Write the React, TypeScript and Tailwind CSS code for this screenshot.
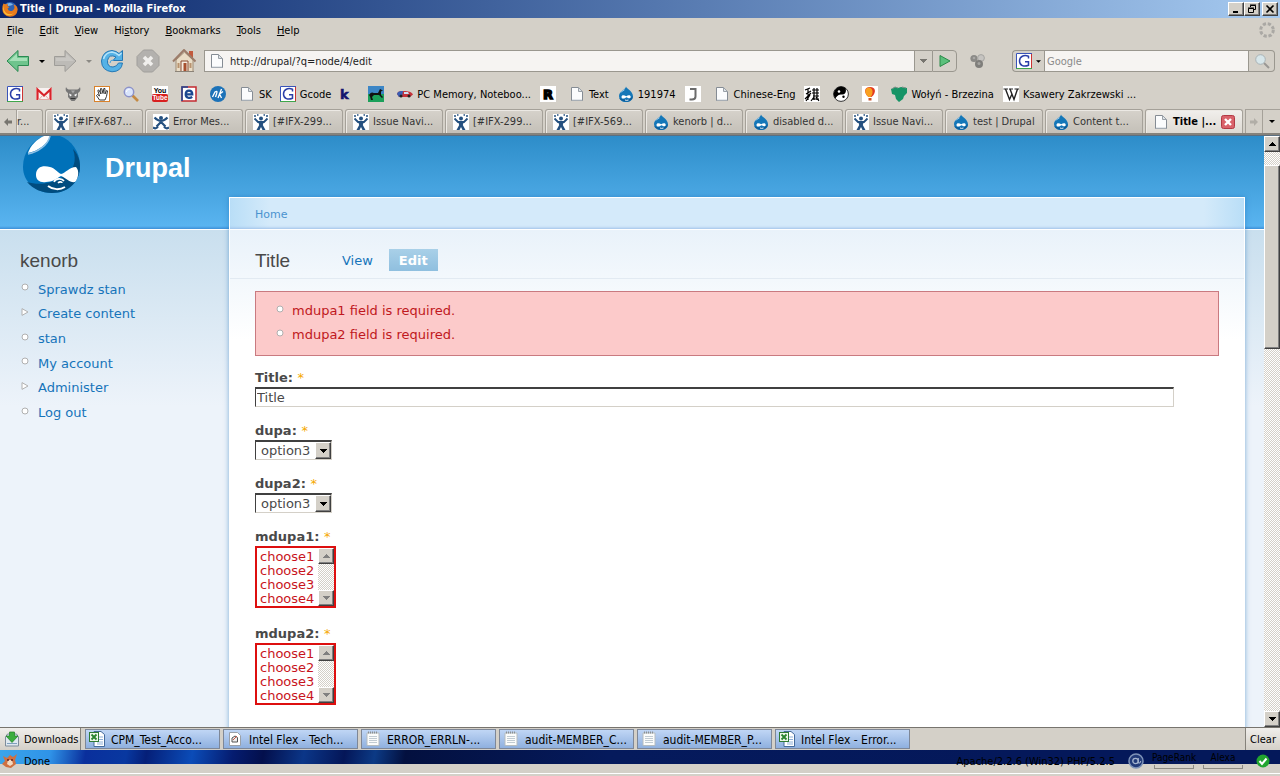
import React from "react";
import clsx from "clsx";

type IconName =
  | "google" | "gmail" | "devil" | "hand" | "magnifier" | "youtube" | "e" | "nk"
  | "page" | "k" | "horse" | "car" | "r" | "drupal" | "j" | "noise" | "yin"
  | "balloon" | "brzezina" | "wiki" | "jira" | "jiraX" | "excel" | "notepad" | "doc";

const Icon: React.FC<{ name: IconName; className?: string }> = ({ name, className }) => (
  <svg viewBox="0 0 16 16" className={clsx("size-4 shrink-0", className)} aria-hidden="true">
    {glyphs[name]}
  </svg>
);

const glyphs: Record<IconName, React.ReactNode> = {
  google: (
    <>
      <rect width="16" height="16" fill="#fff" />
      <path d="M.5 16V.5H16" stroke="#3a54b8" fill="none" />
      <path d="M0 15.500h16" stroke="#3fa64b" />
      <path d="M15.500 1v14" stroke="#c33" />
      <path d="M12.500 5.500V3.300C8 1.500 3.500 3.500 3.500 8s4.500 6.300 9 4.200V8.700H9" fill="none" stroke="#2b3fa8" strokeWidth="1.500" />
    </>
  ),
  gmail: (
    <>
      <rect y="2" width="16" height="12" fill="#f8f1f0" />
      <path d="M1.500 14V3.500L8 9.500l6.500-6V14" fill="none" stroke="#d8232a" strokeWidth="2.200" />
      <path d="M3 13.500l3.500-4M13 13.500l-3.500-4M2 13.500h12" stroke="#e2a9a5" />
    </>
  ),
  devil: (
    <>
      <path d="M1 1c-1 3 0 5 2 6v4l3.500 4h3L13 11V7c2-1 3-3 2-6-1 2-2 2.500-4 2.500H5C3 3.500 2 3 1 1z" fill="#777" />
      <path d="M4 7.500l3 1.500-2 1.500zM12 7.500L9 9l2 1.500z" fill="#fff" />
      <path d="M5.500 12.500h5" stroke="#333" />
      <path d="M6 4.500h4l-2 3z" fill="#a9a9a9" />
    </>
  ),
  hand: (
    <>
      <rect x=".5" y=".5" width="15" height="15" fill="#fff" stroke="#d9822b" />
      <path d="M5.500 14L2.500 9.500l1-1 2 1.500L3.800 4.500l1-.6L7 8 6.500 2.600h1.200L9 7.500l.8-5h1.100L11 8l1.500-3.500 1 .4-1 5.500L11 14z" fill="#fff" stroke="#222" strokeWidth=".9" />
    </>
  ),
  magnifier: (
    <>
      <path d="M9.500 9.500l5.500 5.500" stroke="#c48a43" strokeWidth="2.600" />
      <circle cx="6" cy="6" r="4.700" fill="#d9e4fb" stroke="#8c92c9" strokeWidth="1.500" />
      <path d="M3.500 6a2.500 2.500 0 0 1 3-2.600" stroke="#fff" fill="none" />
    </>
  ),
  youtube: (
    <>
      <rect width="16" height="8" fill="#fff" />
      <rect y="8" width="16" height="8" rx="2" fill="#d8201f" />
      <text x="8" y="6.500" textAnchor="middle" fontSize="7" fontWeight="bold" fontFamily="Liberation Sans, sans-serif">You</text>
      <text x="8" y="14.300" textAnchor="middle" fontSize="6.500" fontWeight="bold" fill="#fff" fontFamily="Liberation Sans, sans-serif">Tube</text>
    </>
  ),
  e: (
    <>
      <rect x="1" y="1" width="14" height="14" fill="#fff" stroke="#c22a30" strokeWidth="1.500" />
      <path d="M1 15V1h6" fill="none" stroke="#1e4b9b" strokeWidth="1.500" />
      <path d="M4.500 8.300h6.800C11.300 3.500 4.700 3.500 4.700 8.300c0 4 4.300 4.300 6.500 2.600" fill="none" stroke="#1b4790" strokeWidth="2.200" />
    </>
  ),
  nk: (
    <>
      <circle cx="8" cy="8" r="8" fill="#1c72b8" />
      <path d="M2.500 11L5 6q3-2 1.500 2L5.500 11M8 12l3.500-9M9 8.500l4-3M9.500 8l2 4" stroke="#fff" strokeWidth="1.300" fill="none" />
    </>
  ),
  page: (
    <>
      <path d="M2.500 1.500h7l4 4v9h-11z" fill="#fbfcfd" stroke="#858c94" />
      <path d="M9.500 1.500v4h4z" fill="#dfe4e8" stroke="#9aa1a8" />
      <path d="M3 14h10" stroke="#c9d0d6" />
    </>
  ),
  k: (
    <text x="1" y="13" fontSize="13" fontWeight="bold" fill="#14146e" stroke="#14146e" strokeWidth=".6" fontFamily="DejaVu Sans, sans-serif">k</text>
  ),
  horse: (
    <>
      <rect width="16" height="8" fill="#3c86c6" />
      <rect y="8" width="16" height="8" fill="#1ba05a" />
      <path d="M1 9c2-3 3-3 5-2h4l2-4 3 1.500-2 1V9l2 2-1 1-3-3H6l-2 2 1 3H3l-1-3.500z" fill="#111" />
    </>
  ),
  car: (
    <>
      <path d="M0 8c1-3 3-3 7-3s8 1 9 3.500L13 11H2z" fill="#c5333a" />
      <path d="M0 8c1-3 3-3 6-3l-1 6H2z" fill="#3a5fb5" />
      <path d="M7 6h4l1 2H7z" fill="#cfe0f2" />
      <circle cx="4" cy="10" r="1.500" fill="#222" />
      <circle cx="12" cy="10" r="1.500" fill="#222" />
    </>
  ),
  r: (
    <>
      <rect width="16" height="16" fill="#fff" />
      <text x="8" y="13" textAnchor="middle" fontSize="13" fontWeight="bold" stroke="#000" strokeWidth="1.400" fontFamily="DejaVu Sans, sans-serif">R</text>
    </>
  ),
  drupal: (
    <>
      <path d="M8 .5C8.500 3 15 5 15 10.300a6.500 5.500 0 0 1-14 0C1 5 7.500 4 8 .5z" fill="#1577b8" />
      <path d="M1.300 12c2 2 11 2.500 13.500-2C15 17 3 17 1.300 12z" fill="#0d5e9b" />
      <path d="M3.500 11c0-2.500 3-2 4.700-.7 2-1.500 4.700-1.500 4.500.9-.6 2-2.700.8-4.300.1C6.500 12.600 3.700 13.500 3.500 11z" fill="#fff" />
      <path d="M7 14q1.500.8 3.500 0" stroke="#fff" fill="none" strokeWidth=".9" />
      <path d="M3 6.500Q4.500 4.500 6.500 3.800" stroke="#a8d2ee" fill="none" />
    </>
  ),
  j: (
    <>
      <rect width="16" height="16" fill="#fff" />
      <path d="M5 3h5.500v7.500q0 3-3.500 3H4.500" fill="none" stroke="#6b6b6b" strokeWidth="2" />
    </>
  ),
  noise: (
    <>
      <rect width="16" height="16" fill="#fff" />
      <path d="M1 4l5-2M2 8l5-3M1 13l6-6M4 3v11M6 9l-4 6M8 4h7M8 7h7M9 10h6M8 13h7M10 2v12M13 2v12M7 15l3-4M12 11l3 4" stroke="#000" strokeWidth="1.200" />
    </>
  ),
  yin: (
    <>
      <circle cx="8" cy="8" r="7.400" fill="#fff" stroke="#333" />
      <path d="M12.500 2A7.400 7.400 0 0 0 2 12C3 13 4 8 8.500 8.500S13.500 5 12.500 2z" fill="#000" />
      <circle cx="6" cy="5.500" r="1.300" fill="#fff" />
      <circle cx="10.500" cy="10.800" r="1.200" fill="#000" />
    </>
  ),
  balloon: (
    <>
      <rect width="16" height="16" fill="#fff" />
      <path d="M8 1c6 0 6.500 6 1.500 10h-3C1.500 7 2 1 8 1z" fill="#e23a22" />
      <path d="M7 1.500c5 1 4 7 1.500 9.500h-2C1.500 7 3 1.500 7 1.500z" fill="#f9a01f" />
      <rect x="6.500" y="12" width="3" height="2.500" fill="#c9542c" />
    </>
  ),
  brzezina: (
    <>
      <path d="M0 3l4-2 3 1 3-1 6 1v5l-3 3-1 3-4 3-3-3-1-4-3-1z" fill="#169466" />
      <path d="M1 3l3-2 3 1M11 1l4 1" stroke="#7f8f88" fill="none" />
    </>
  ),
  wiki: (
    <>
      <rect width="16" height="16" fill="#fff" />
      <path d="M.5 3h4.500M6 3h4M11.500 3H16" stroke="#222" />
      <path d="M2.500 3l4 10.500L9 8M7 3l4 10.500L14.500 3" stroke="#222" strokeWidth="1.400" fill="none" />
    </>
  ),
  jira: (
    <>
      <rect width="16" height="16" fill="#fff" />
      <circle cx="8" cy="4.500" r="2" fill="#24507f" />
      <path d="M1.500 4.500L5 8h6l3.500-3.500" stroke="#24507f" strokeWidth="1.800" fill="none" />
      <path d="M5 7.200h6L9.800 11l2.700 5H9.500L8 13l-1.500 3h-3l2.700-5z" fill="#24507f" />
      <path d="M1 2h2M4 1h1.500M10.500 1H12M13 2h2" stroke="#24507f" strokeWidth="1.300" />
    </>
  ),
  jiraX: (
    <>
      <rect width="16" height="16" fill="#fff" />
      <path d="M1.500 3.500Q5 7 8 7t6.500-3.500M8 8l-4.500 4.500M8 8l4.500 4.500M0 13.500q3 2 5-1M16 13.500q-3 2-5-1" stroke="#24507f" strokeWidth="2.200" fill="none" />
      <circle cx="8" cy="4" r="2" fill="#24507f" />
    </>
  ),
  excel: (
    <>
      <path d="M5 .5h7l3.500 3v12H5z" fill="#fff" stroke="#456a9b" />
      <path d="M8 6h6M8 8.500h6M8 11h6M8 13h6" stroke="#8fb0d8" />
      <rect x=".5" y="1.500" width="9" height="9" fill="#eef7ea" stroke="#2f7a34" />
      <path d="M2.500 3.500l5 5M7.500 3.500l-5 5" stroke="#28832f" strokeWidth="1.800" />
    </>
  ),
  notepad: (
    <>
      <path d="M2 2h12v12.500H2z" fill="#fbfcfb" stroke="#b5bcc0" />
      <path d="M3 1.500h10" stroke="#8b8f92" strokeDasharray="1 1" strokeWidth="2" />
      <path d="M4 5.500h8M4 7.500h8M4 9.500h8M4 11.500h8" stroke="#c1cbd2" />
    </>
  ),
  doc: (
    <>
      <path d="M2.500 1.500h8l3 3v10h-11z" fill="#fff" stroke="#9aa0a8" />
      <path d="M5 7l3-2 2.500 1.500V11H5z" fill="#eee" stroke="#555" />
      <path d="M6 9l4-4" stroke="#c54" />
    </>
  ),
};

const menus = [
  ["", "F", "ile"],
  ["", "E", "dit"],
  ["", "V", "iew"],
  ["Hi", "s", "tory"],
  ["", "B", "ookmarks"],
  ["", "T", "ools"],
  ["", "H", "elp"],
];

const bookmarks: { icon: IconName; label?: string; tight?: boolean }[] = [
  { icon: "google" },
  { icon: "gmail" },
  { icon: "devil" },
  { icon: "hand" },
  { icon: "magnifier" },
  { icon: "youtube" },
  { icon: "e" },
  { icon: "nk" },
  { icon: "page", label: "SK", tight: true },
  { icon: "google", label: "Gcode", tight: true },
  { icon: "k" },
  { icon: "horse" },
  { icon: "car", label: "PC Memory, Noteboo..." },
  { icon: "r" },
  { icon: "page", label: "Text" },
  { icon: "drupal", label: "191974" },
  { icon: "j" },
  { icon: "page", label: "Chinese-Eng" },
  { icon: "noise" },
  { icon: "yin" },
  { icon: "balloon" },
  { icon: "brzezina", label: "Wołyń - Brzezina" },
  { icon: "wiki", label: "Ksawery Zakrzewski ..." },
];

const tabs: { icon: IconName; label: string }[] = [
  { icon: "jira", label: "[#IFX-687..." },
  { icon: "jiraX", label: "Error Mes..." },
  { icon: "jira", label: "[#IFX-299..." },
  { icon: "jira", label: "Issue Navi..." },
  { icon: "jira", label: "[#IFX-299..." },
  { icon: "jira", label: "[#IFX-569..." },
  { icon: "drupal", label: "kenorb | d..." },
  { icon: "drupal", label: "disabled d..." },
  { icon: "jira", label: "Issue Navi..." },
  { icon: "drupal", label: "test | Drupal" },
  { icon: "drupal", label: "Content t..." },
];

const downloads: { icon: IconName; label: string }[] = [
  { icon: "excel", label: "CPM_Test_Acco..." },
  { icon: "doc", label: "Intel Flex - Tech..." },
  { icon: "notepad", label: "ERROR_ERRLN-..." },
  { icon: "notepad", label: "audit-MEMBER_C..." },
  { icon: "notepad", label: "audit-MEMBER_P..." },
  { icon: "excel", label: "Intel Flex - Error..." },
];

const sideLinks = [
  { label: "Sprawdz stan" },
  { label: "Create content", parent: true },
  { label: "stan" },
  { label: "My account" },
  { label: "Administer", parent: true },
  { label: "Log out" },
];

const raised =
  "border border-t-white border-l-white border-r-[#404040] border-b-[#404040] bg-[#d4d0c8] shadow-[inset_-1px_-1px_0_#808080]";
const dither =
  "bg-[repeating-conic-gradient(#d4d0c8_0_25%,#fff_0_50%)] bg-[length:2px_2px]";

const Caret: React.FC<{ up?: boolean; color?: string }> = ({ up, color = "#000" }) => (
  <svg viewBox="0 0 7 4" className="h-1 w-[7px]" aria-hidden="true" shapeRendering="crispEdges">
    <path d={up ? "M0 4h7L3.500 0z" : "M0 0h7L3.500 4z"} fill={color} />
  </svg>
);

const Bullet: React.FC<{ parent?: boolean }> = ({ parent }) => (
  <svg viewBox="0 0 8 8" className="mb-1 size-2 shrink-0" aria-hidden="true">
    {parent ? (
      <path d="M1 .6v6.800L7 4z" fill="#fff" stroke="#b0b0b0" />
    ) : (
      <circle cx="4" cy="4" r="3" fill="#fff" stroke="#b0b0b0" />
    )}
  </svg>
);

const FirefoxLogo = () => (
  <svg viewBox="0 0 16 16" className="size-4 shrink-0" aria-hidden="true">
    <circle cx="8" cy="8" r="7" fill="#2c62b5" />
    <path d="M5 2.500q4-1.500 6 1l-2 1-3 .5z" fill="#7cb5e8" />
    <path d="M1.500 2.500Q3 3.500 4 3.300q1-.8 2-.6L5.300 5l2.200 1-2 1.500q1 3 4 2.500 3-1 3-4l-1-2.500Q15.500 4.500 15.700 8.500 15 15.500 8 15.700.5 15 .3 8q0-3.500 1.200-5.500z" fill="#e87b1c" />
    <path d="M1.500 3Q.5 9 4 12q4 2.500 8 0-3 3.500-7.500 2Q-.5 11 1.500 3z" fill="#f9c138" />
  </svg>
);

const DrupalLogo = () => (
  <svg viewBox="0 0 58 58" className="h-[58px] w-[58px] shrink-0" aria-hidden="true">
    <path d="M22 0h16C49 4 58 15 58 30 58 46 46 57 30 57S1 46 1 31C1 16 10 5 22 0z" fill="#0071b9" />
    <path d="M51 13c4 12 1 21-9 27-10 7-24 10-37 6 6 7 15 11 25 11 16 0 28-11 28-27 0-7-3-13-7-17z" fill="#004c7f" />
    <path d="M22 0h6c-2 8-12 15-22 17C8 10 15 3 22 0z" fill="#fff" />
    <path d="M28 0c-2 9-12 16-22 18" stroke="#8ec1e6" strokeWidth="1.500" fill="none" />
    <path d="M14 39c0-9 8-10 14-8 5 1 7 5 11 7 5-1 8-7 15-7 4 4 2 12-1 15-5 1-9-4-14-6-5 3-9 6-15 6-6 1-10-2-10-7z" fill="#fff" />
    <path d="M32 46c2-4 8-4 10-1M36 47c2-2 4-1 4 0" stroke="#fff" strokeWidth="1.600" fill="none" />
    <path d="M26 50c5 4 12 4 17 1" stroke="#fff" strokeWidth="2" fill="none" />
  </svg>
);

const NavIcon: React.FC<{ label: string; children: React.ReactNode; className?: string }> = ({
  label,
  children,
  className,
}) => (
  <button type="button" aria-label={label} className={clsx("shrink-0", className)}>
    <svg viewBox="0 0 24 24" className="size-6">
      {children}
    </svg>
  </button>
);

const Toolbar = () => (
  <div className="flex h-[38px] items-center pr-[5px] pl-[6px]">
    <NavIcon label="Back">
      <path d="M1 12L12 1.500v6h10.500v9H12v6z" fill="#6fc48d" stroke="#2a8a52" />
      <path d="M3 12l8-7.500V9h10v3z" fill="#a6e0b8" />
    </NavIcon>
    <button type="button" aria-label="Back history" className="flex w-[23px] justify-center">
      <svg viewBox="0 0 6 3" className="h-[3px] w-[6px]"><path d="M0 0h6L3 3z" /></svg>
    </button>
    <NavIcon label="Forward">
      <path d="M23 12L12 1.500v6H1.500v9H12v6z" fill="#bdbbb7" stroke="#9f9d99" />
      <path d="M21 12l-8-7.500V9H3v3z" fill="#c9c7c3" />
    </NavIcon>
    <button type="button" aria-label="Forward history" className="flex w-[23px] justify-center">
      <svg viewBox="0 0 6 3" className="h-[3px] w-[6px]"><path d="M0 0h6L3 3z" fill="#8b8984" /></svg>
    </button>
    <NavIcon label="Reload">
      <path d="M19 4.500L22.500 1.500v10H13l3-3.500Q9 4.500 7.500 11.500 7 18 13 18q4-.5 5.500-4h4Q21.500 22.500 12 22.800 1.500 21.500 1.500 12 2.500 2 12 1.500q4.500.5 7 3z" fill="#55b2e6" stroke="#2478b5" />
      <path d="M3.500 10q2-6.500 8.500-7 4 .5 7 3.500l2.500-2.500" stroke="#b5e3fa" strokeWidth="1.500" fill="none" />
      <path d="M10 14q0-3.500 4-3" stroke="#4aa2d8" fill="none" />
    </NavIcon>
    <NavIcon label="Stop" className="ml-3">
      <path d="M7.500 1h9L23 7.500v9L16.500 23h-9L1 16.500v-9z" fill="#b3b1ae" stroke="#a09e9b" />
      <path d="M8 8l8 8M16 8l-8 8" stroke="#f0efed" strokeWidth="3.500" />
    </NavIcon>
    <NavIcon label="Home" className="ml-3">
      <path d="M17 2h4v9h-4z" fill="#c25a3e" />
      <path d="M4 11v11.500h17V11l-8.500-8z" fill="#e9dcc6" stroke="#a08c74" />
      <path d="M1 12.500L12 1l11.500 11.500" stroke="#9c7c6a" strokeWidth="2" fill="none" />
      <path d="M9 12h7v10.500H9z" fill="#f4ece0" stroke="#8a4a30" />
      <path d="M11.500 14h3v8.500h-3z" fill="#a8502e" />
      <path d="M5.500 14h2v5h-2zM17.500 14h2v5h-2z" fill="#b8926e" />
      <path d="M3 22.500h19" stroke="#8b8378" />
    </NavIcon>

    <form className="ml-2 flex h-[22px] min-w-0 flex-1" onSubmit={(e) => e.preventDefault()}>
      <label className="flex min-w-0 flex-1 items-center border border-[#9a978f] bg-[#f6f4f2] pl-1">
        <Icon name="page" />
        <input
          aria-label="Address"
          defaultValue="http://drupal/?q=node/4/edit"
          className="ml-[5px] min-w-0 flex-1 bg-transparent pt-[2px] text-[#222] outline-none"
        />
      </label>
      <button type="button" aria-label="Show history" className="flex w-[17px] items-center justify-center border-y border-[#9a978f]">
        <Caret color="#77756f" />
      </button>
      <button type="submit" aria-label="Go" className="flex w-[25px] items-center justify-center rounded-r border border-[#9a978f]">
        <svg viewBox="0 0 14 14" className="size-[14px]">
          <path d="M2 1.500v11L12 7z" fill="#5cc07c" stroke="#2b8a48" />
        </svg>
      </button>
    </form>

    <svg viewBox="0 0 16 16" className="mx-[13px] size-4 shrink-0" aria-hidden="true">
      <circle cx="4" cy="5.500" r="3.600" fill="#8b8a87" />
      <circle cx="11" cy="5" r="3.400" fill="#c6c4c1" stroke="#a5a4a1" />
      <circle cx="9" cy="11" r="4" fill="#7f7e7b" />
      <circle cx="9" cy="10.500" r="1.500" fill="#a4a3a0" />
      <circle cx="4" cy="5" r="1.300" fill="#a9a8a5" />
    </svg>

    <form className="ml-[13px] flex h-[22px] w-[263px] shrink-0" onSubmit={(e) => e.preventDefault()}>
      <button type="button" aria-label="Search engine" className="flex w-8 items-center gap-1 rounded-l border border-r-0 border-[#9a978f] pl-[3px]">
        <Icon name="google" />
        <svg viewBox="0 0 6 3" className="h-[3px] w-[5px]"><path d="M0 0h6L3 3z" /></svg>
      </button>
      <input
        aria-label="Search"
        placeholder="Google"
        className="min-w-0 flex-1 border border-[#9a978f] bg-[#f6f4f2] px-[2px] pt-[2px] outline-none placeholder:text-[#8a8a8a]"
      />
      <button type="submit" aria-label="Run search" className="flex w-[26px] items-center justify-center rounded-r border border-l-0 border-[#9a978f]">
        <svg viewBox="0 0 16 16" className="size-4">
          <path d="M10 10l5 5" stroke="#9a9894" strokeWidth="2" />
          <circle cx="6.500" cy="6.500" r="4.800" fill="#d7e6ea" stroke="#a9b3b6" />
        </svg>
      </button>
    </form>
  </div>
);

const tabShape =
  "flex shrink-0 items-center rounded-t-[3px] border border-b-0 border-[#a5a199] shadow-[inset_1px_1px_0_#ece9e4]";

const TabStrip = () => (
  <div className="flex h-[27px] border-b-2 border-[#85827b] pt-px">
    <button type="button" aria-label="Scroll tabs left" className="flex w-[17px] items-center justify-center border-t border-r border-[#a5a199]">
      <svg viewBox="0 0 8 8" className="size-2"><path d="M0 4l4-4v2.500h4v3H4V8z" fill="#77756f" /></svg>
    </button>
    <div className="flex min-w-0 flex-1 gap-[2px] overflow-hidden">
      <button type="button" className={clsx(tabShape, "w-[26px] rounded-l-none border-l-0 pt-[2px] text-[#333]")}>r...</button>
      {tabs.map((tab, i) => (
        <button
          key={i}
          type="button"
          className={clsx(tabShape, "w-[98px] gap-1 bg-linear-to-b from-[#d6d2cb] to-[#c4c0b8] pl-[7px] whitespace-nowrap text-[#333]")}
        >
          <Icon name={tab.icon} />
          <span className="pt-[2px]">{tab.label}</span>
        </button>
      ))}
      <div className={clsx(tabShape, "w-[98px] bg-linear-to-b from-[#f1efec] to-[#dedad3] pl-[7px]")}>
        <Icon name="page" />
        <button type="button" className="ml-1 flex-1 pt-[2px] text-left font-bold whitespace-nowrap">Title |...</button>
        <button type="button" aria-label="Close tab" className="mr-[7px] shrink-0">
          <svg viewBox="0 0 14 14" className="size-[14px]">
            <rect x=".5" y=".5" width="13" height="13" rx="2" fill="#d9626a" stroke="#b23a45" />
            <path d="M4 4l6 6M10 4l-6 6" stroke="#fff" strokeWidth="2.400" />
          </svg>
        </button>
      </div>
    </div>
    <button type="button" aria-label="Scroll tabs right" className="flex w-[17px] items-center justify-center border-t border-l border-[#a5a199]">
      <svg viewBox="0 0 8 8" className="size-2"><path d="M8 4L4 0v2.500H0v3h4V8z" fill="#b1aea7" /></svg>
    </button>
    <button type="button" aria-label="List all tabs" className="flex w-[18px] items-center justify-center border-t border-l border-[#a5a199]">
      <svg viewBox="0 0 6 3" className="h-[3px] w-[6px]"><path d="M0 0h6L3 3z" /></svg>
    </button>
  </div>
);

const FieldLabel: React.FC<{ id: string; children: React.ReactNode }> = ({ id, children }) => (
  <label htmlFor={id} className="block h-5 pt-px leading-5 font-bold">
    {children}: <span className="font-normal text-[#f5a800]">*</span>
  </label>
);

const sunken = "border border-t-2 border-t-[#404040] border-l-[#404040] border-r-[#d4d0c8] border-b-[#d4d0c8] bg-white";

const DropDown: React.FC<{ id: string; label: string }> = ({ id, label }) => (
  <div className="mb-[13px]">
    <FieldLabel id={id}>{label}</FieldLabel>
    <div className={clsx("relative h-5 w-[77px]", sunken)}>
      <select id={id} defaultValue="option3" className="block h-full w-full appearance-none pl-[5px] leading-4 outline-none">
        <option>option1</option>
        <option>option2</option>
        <option>option3</option>
      </select>
      <span className={clsx("pointer-events-none absolute inset-y-0 right-0 flex w-4 items-center justify-center", raised)}>
        <Caret />
      </span>
    </div>
  </div>
);

const ListBox: React.FC<{ id: string; label: string }> = ({ id, label }) => (
  <div className="mb-[15px]">
    <FieldLabel id={id}>{label}</FieldLabel>
    <div className="flex h-[62px] w-[81px] border-2 border-[#dd0f0f] bg-white">
      <select id={id} multiple size={4} className="h-full min-w-0 flex-1 appearance-none overflow-hidden py-px text-[#c8141c] outline-none">
        {[1, 2, 3, 4].map((n) => (
          <option key={n} className="h-[14px] min-h-0 p-0 pl-[3px] leading-[14px]">
            choose{n}
          </option>
        ))}
      </select>
      <div className={clsx("flex w-4 flex-col justify-between", dither)}>
        <button type="button" aria-label="Scroll up" className={clsx("flex h-4 items-center justify-center", raised)}>
          <Caret up color="#808080" />
        </button>
        <button type="button" aria-label="Scroll down" className={clsx("flex h-4 items-center justify-center", raised)}>
          <Caret color="#808080" />
        </button>
      </div>
    </div>
  </div>
);

const DrupalPage = () => (
  <div className="min-w-0 flex-1 overflow-hidden bg-[#edf3fa] bg-[linear-gradient(#2d8dc9_0,#59b4f0_90px,#3d8fd8_93px,#fff_93px,#fff_94px,#c9dfee_94px,#edf3fa_270px)] font-['DejaVu_Sans',Verdana,sans-serif] text-[13px] text-[#494949]">
    <header className="flex h-[61px] items-start gap-[25px] pl-[22px]">
      <DrupalLogo />
      <a href="#home" className="pt-4 font-['Liberation_Sans',Arial,sans-serif] text-[27px] leading-8 font-bold text-white">Drupal</a>
    </header>
    <div className="flex h-full">
      <aside className="w-[229px] shrink-0 pt-[52px] pl-5">
        <h2 className="font-['Liberation_Sans',Arial,sans-serif] text-[19px] leading-6">kenorb</h2>
        <ul className="mt-1 grid h-[148px] grid-rows-6">
          {sideLinks.map((link) => (
            <li key={link.label} className="flex items-center gap-[9px] pl-px">
              <Bullet parent={link.parent} />
              <a href="#menu" className="text-[#1674ba]">{link.label}</a>
            </li>
          ))}
        </ul>
      </aside>

      <main className="mr-[19px] min-w-0 flex-1 border-x border-t border-white bg-white shadow-[0_0_5px_#1f6fb88c]">
        <nav className="flex h-8 items-center border-b border-white bg-[linear-gradient(90deg,#b9def7,#d4eafa_40px,#d4eafa_calc(100%-40px),#b9def7)] px-[25px] pt-[3px] text-[11px] shadow-[inset_0_-3px_3px_-2px_#9dbfe8]">
          <a href="#home" className="text-[#4a93cf]">Home</a>
        </nav>
        <div className="bg-[linear-gradient(#e9f2fa,#fff_110px)]">
          <div className="flex h-[49px] items-center border-b border-[#e2eaf2] pt-3 pl-[25px]">
            <h1 className="w-[77px] pt-[2px] font-['Liberation_Sans',Arial,sans-serif] text-[19px]">Title</h1>
            <a href="#view" className="px-[10px] pt-px leading-[21px] text-[#1674ba]">View</a>
            <a href="#edit" className="ml-[6px] bg-linear-to-b from-[#a9d0e8] to-[#8fbfdf] px-[10px] pt-px leading-[21px] font-bold text-white">Edit</a>
          </div>
          <div className="px-[25px] pt-3">
            <ul className="border border-[#c97a80] bg-[#fccaca] pt-[7px] pb-2 pl-5 text-[#c01820]">
              {["mdupa1 field is required.", "mdupa2 field is required."].map((msg) => (
                <li key={msg} className="flex h-6 items-center gap-2">
                  <Bullet />
                  {msg}
                </li>
              ))}
            </ul>

            <form className="pt-[11px]" onSubmit={(e) => e.preventDefault()}>
              <div className="mb-[13px]">
                <FieldLabel id="edit-title">Title</FieldLabel>
                <input id="edit-title" defaultValue="Title" className={clsx("block h-5 w-[95.3%] px-px outline-none", sunken)} />
              </div>
              <DropDown id="edit-dupa" label="dupa" />
              <DropDown id="edit-dupa2" label="dupa2" />
              <ListBox id="edit-mdupa1" label="mdupa1" />
              <ListBox id="edit-mdupa2" label="mdupa2" />
            </form>
          </div>
        </div>
      </main>
    </div>
  </div>
);

const ScrollBar = () => (
  <div className={clsx("flex w-4 shrink-0 flex-col", dither)}>
    <button type="button" aria-label="Scroll page up" className={clsx("flex h-4 items-center justify-center", raised)}>
      <Caret up />
    </button>
    <div className="grow-13" />
    <div className={clsx("grow-182", raised)} />
    <div className="grow-363" />
    <button type="button" aria-label="Scroll page down" className={clsx("flex h-4 items-center justify-center", raised)}>
      <Caret />
    </button>
  </div>
);

const windowButton = "flex h-[14px] w-4 items-center justify-center";

export default function App() {
  return (
    <div className="flex h-screen flex-col overflow-hidden bg-[#d4d0c8] font-['DejaVu_Sans_Condensed',Tahoma,sans-serif] text-[11px] text-black">
      <div className="flex h-[18px] items-center bg-linear-to-r from-[#0a246a] to-[#a6caf0] pr-[2px] pl-[2px]">
        <FirefoxLogo />
        <span className="ml-[2px] flex-1 font-bold text-white">Title | Drupal - Mozilla Firefox</span>
        <button type="button" aria-label="Minimize" className={clsx(windowButton, raised)}>
          <svg viewBox="0 0 10 10" className="size-[10px]"><path d="M2 8h5" stroke="#000" strokeWidth="2" /></svg>
        </button>
        <button type="button" aria-label="Restore" className={clsx(windowButton, raised)}>
          <svg viewBox="0 0 10 10" className="size-[10px]">
            <path d="M3.500 3V1.500h5v4H7M3 1h6M1.500 4.500h5v4h-5zM1 4h6" stroke="#000" fill="none" />
          </svg>
        </button>
        <button type="button" aria-label="Close" className={clsx(windowButton, "ml-[2px]", raised)}>
          <svg viewBox="0 0 10 10" className="size-[10px]"><path d="M1.500 1.500l7 7M8.500 1.500l-7 7" stroke="#000" strokeWidth="1.600" /></svg>
        </button>
      </div>

      <div className="flex h-6 items-center justify-between pr-[5px]">
        <div className="flex gap-4 pt-[2px] pl-[7px]">
          {menus.map(([before, key, after]) => (
            <button key={key + after} type="button">
              {before}
              <span className="underline">{key}</span>
              {after}
            </button>
          ))}
        </div>
        <svg viewBox="0 0 16 16" className="size-4" aria-hidden="true">
          <circle cx="8" cy="8" r="6.300" fill="none" stroke="#aaa8a4" strokeWidth="3" strokeDasharray="3.200 1.748" />
        </svg>
      </div>

      <Toolbar />

      <div className="flex h-7 items-center gap-[9px] overflow-hidden pl-[7px]">
        {bookmarks.map((b, i) => (
          <a
            key={i}
            href="#bookmark"
            aria-label={b.label ?? b.icon}
            className={clsx("flex shrink-0 items-center gap-1 whitespace-nowrap", b.tight && "-mr-px")}
          >
            <Icon name={b.icon} />
            <span className="pt-[2px]">{b.label}</span>
          </a>
        ))}
      </div>

      <TabStrip />

      <div className="flex min-h-0 flex-1 border-t border-[#5b6f80]">
        <DrupalPage />
        <ScrollBar />
      </div>

      <div className="flex h-[23px] items-stretch border-t border-[#77746e]">
        <button type="button" className="flex w-[81px] items-center gap-1 border-r border-[#85827b] bg-linear-to-b from-[#f0eeeb] to-[#d4d0c8] pl-1">
          <svg viewBox="0 0 16 16" className="size-4" aria-hidden="true">
            <path d="M1.500 6l2-3h9l2 3v9h-13z" fill="#dfe8f0" stroke="#7d8c9a" />
            <path d="M3 12.500h10" stroke="#7fa0bd" />
            <path d="M5.500 1h5v4H14l-6 6.500L2 5h3.500z" fill="#3cae3f" stroke="#1f7f27" strokeWidth=".7" />
          </svg>
          <span className="pt-[2px]">Downloads</span>
        </button>
        <div className="flex flex-1 gap-[3px] py-px pl-1 text-[12px]">
          {downloads.map((d) => (
            <button
              key={d.label}
              type="button"
              className="flex w-[135px] items-center gap-[6px] border border-[#7e8797] bg-linear-to-b from-[#c0d6f5] to-[#8fb0df] pl-[3px] whitespace-nowrap"
            >
              <Icon name={d.icon} />
              <span className="pt-px">{d.label}</span>
            </button>
          ))}
        </div>
        <button type="button" className="border-l border-[#85827b] bg-linear-to-b from-[#f0eeeb] to-[#d4d0c8] px-1 pt-[2px]">Clear</button>
      </div>

      <footer className="flex h-[26px] items-start bg-[linear-gradient(transparent_14px,#d4d0c8_14px,#d4d0c8_23px,#fff_23px,#fff_24px,#d4d0c8_24px),linear-gradient(100deg,#3aa5ea_0,#2f93e8_50px,#0a2f9c_85px,#0838a0_125px,#051f78_145px,#0b4cb8_190px,#051c70_230px,#030f4c_260px,#0b3688_300px,#041658_340px,#0c3a85_370px,#03103f_400px,#051a5c_600px,#04185a_1000px)] pr-1 pl-[2px]">
        <svg viewBox="0 0 16 16" className="mt-[3px] size-4 shrink-0" aria-hidden="true">
          <path d="M1 3l4 2 3-3 3 2 4-3-2 6 1 4-5 4-5-1-4-3 3-3z" fill="#cf7040" />
          <path d="M6 7h4l1 4-3 2-3-2z" fill="#f3d9c0" />
          <circle cx="6" cy="7" r="1" fill="#622" />
          <circle cx="10" cy="7" r="1" fill="#622" />
        </svg>
        <span className="ml-[6px] flex-1 leading-6">Done</span>
        <span className="leading-6">Apache/2.2.6 (Win32) PHP/5.2.5</span>
        <svg viewBox="0 0 16 16" className="mt-[3px] mr-[9px] ml-[13px] size-4 shrink-0" aria-hidden="true">
          <circle cx="8" cy="8" r="7" fill="#223a78" stroke="#7f93b8" strokeWidth="1.500" />
          <circle cx="7.500" cy="8" r="2.700" fill="none" stroke="#a5b4cf" strokeWidth="1.300" />
          <path d="M10.300 5v5q2 1 2.500-2" stroke="#a5b4cf" fill="none" />
        </svg>
        <div className="flex gap-[7px] text-center text-[10px] leading-[15px]">
          <div className="flex w-[42px] flex-col items-center">
            PageRank
            <span className="h-1 w-10 border border-t-0 border-[#8e8b84]" />
          </div>
          <div className="flex w-[42px] flex-col items-center">
            Alexa
            <span className="h-1 w-10 border border-t-0 border-[#8e8b84]" />
          </div>
        </div>
        <svg viewBox="0 0 14 14" className="mt-1 mr-[6px] ml-[12px] size-[14px] shrink-0" aria-hidden="true">
          <circle cx="7" cy="7" r="6.500" fill="#22a52f" />
          <path d="M3.500 7l2.500 3 4.500-5.500" stroke="#fff" strokeWidth="2" fill="none" />
        </svg>
      </footer>
    </div>
  );
}
